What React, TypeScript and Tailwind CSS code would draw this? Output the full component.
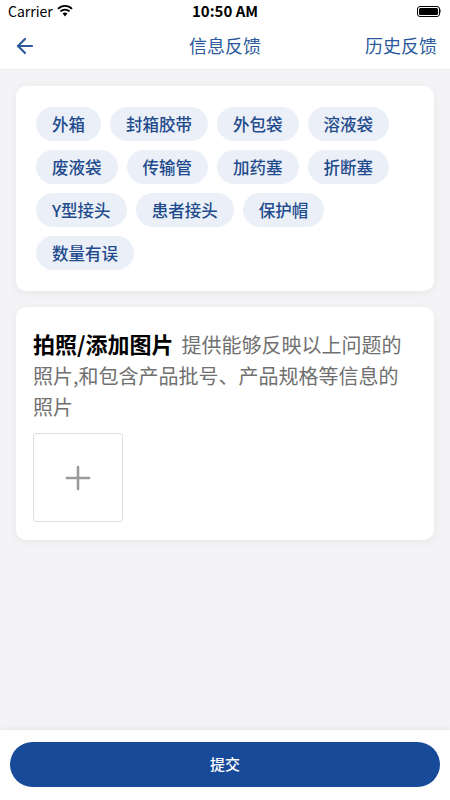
import { ArrowLeft, Plus } from 'lucide-react';

const tags = [
  '外箱', '封箱胶带', '外包袋', '溶液袋',
  '废液袋', '传输管', '加药塞', '折断塞',
  'Y型接头', '患者接头', '保护帽', '数量有误',
];

const font = { fontFamily: '"Noto Sans CJK SC", "Noto Sans", sans-serif' };

const StatusBar = () => (
  <div className="h-[22px] flex items-center justify-between px-2 bg-white relative">
    <div className="flex items-center gap-1">
      <span className="text-[14px] text-black">Carrier</span>
      <svg width="16" height="12" viewBox="0 0 16 12">
        <path d="M8 11.5 L5.6 8.6 A3.6 3.6 0 0 1 10.4 8.6 Z" fill="#000" />
        <path d="M3.4 6.4 A6.6 6.6 0 0 1 12.6 6.4" stroke="#000" strokeWidth="1.8" fill="none" />
        <path d="M1 3.8 A10 10 0 0 1 15 3.8" stroke="#000" strokeWidth="1.8" fill="none" />
      </svg>
    </div>
    <span className="absolute left-1/2 -translate-x-1/2 text-[15px] font-semibold text-black">10:50 AM</span>
    <div className="flex items-center pr-[1px]">
      <div className="w-[23px] h-[11px] rounded-[3px] border border-black p-[1px]">
        <div className="w-full h-full bg-black rounded-[1.5px]" />
      </div>
      <div className="w-[1.5px] h-[4px] bg-black/50 rounded-r" />
    </div>
  </div>
);

export default function App() {
  return (
    <div className="w-[450px] h-[800px] flex flex-col bg-[#f4f4f7]" style={font}>
      <StatusBar />

      {/* Nav */}
      <div className="h-[48px] bg-white border-b border-[#ececef] flex items-center justify-between px-[13px] relative">
        <ArrowLeft size={24} strokeWidth={2.2} className="text-[#2c5a9c]" />
        <span className="absolute left-1/2 -translate-x-1/2 text-[18px] text-[#2c5a9c]">信息反馈</span>
        <span className="text-[18px] text-[#2c5a9c]">历史反馈</span>
      </div>

      <div className="flex-1 flex flex-col gap-4 px-4 pt-4">
        {/* Tags card */}
        <div className="bg-white rounded-[10px] shadow-[0_2px_10px_rgba(0,0,0,0.06)] px-5 py-[21px]">
          <div className="flex flex-wrap gap-x-[9px] gap-y-[9px]">
            {tags.map((t) => (
              <span
                key={t}
                className="h-[34px] flex items-center px-[16px] rounded-full bg-[#ebf0f8] text-[16.5px] font-medium text-[#1f4b8d]"
              >
                {t}
              </span>
            ))}
          </div>
        </div>

        {/* Photo card */}
        <div className="bg-white rounded-[10px] shadow-[0_2px_10px_rgba(0,0,0,0.06)] pl-[17px] pr-[24px] pt-[21px] pb-[18px]">
          <p className="leading-[30px]">
            <span className="text-[22px] font-bold text-black">拍照/添加图片</span>
            <span className="ml-[8px] text-[20px] text-[#707070]">提供能够反映以上问题的照片,和包含产品批号、产品规格等信息的照片</span>
          </p>
          <div className="mt-[10px] w-[90px] h-[89px] border border-[#dedede] rounded-[3px] flex items-center justify-center">
            <Plus size={38} strokeWidth={1.6} className="text-[#9a9a9a]" />
          </div>
        </div>
      </div>

      {/* Bottom bar */}
      <div className="h-[70px] bg-white shadow-[0_-2px_6px_rgba(0,0,0,0.05)] flex items-start justify-center pt-[12px]">
        <button className="w-[430px] h-[45px] rounded-full bg-[#174a99] text-white text-[15px] font-medium">
          提交
        </button>
      </div>
    </div>
  );
}
